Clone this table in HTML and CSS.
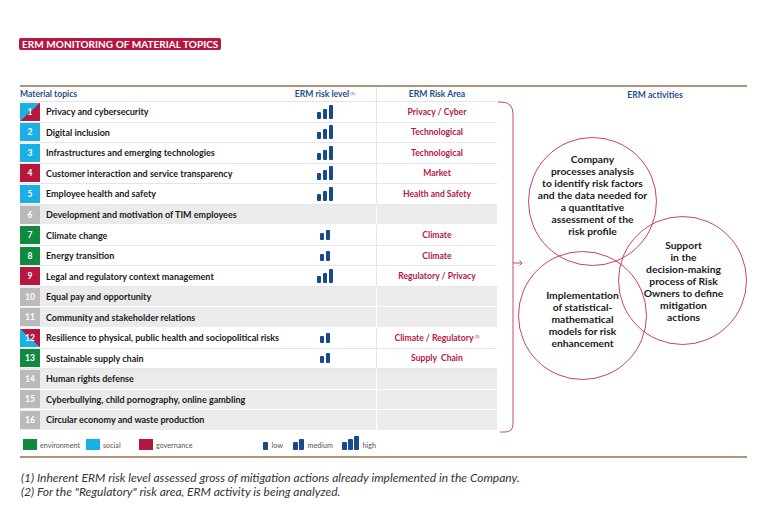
FILE: index.html
```html
<!DOCTYPE html>
<html lang="en">
<head>
<meta charset="utf-8">
<title>ERM monitoring of material topics</title>
<link rel="stylesheet" href="styles.css">
</head>
<body>
<div class="page">
  <div class="title"><span class="badge">ERM MONITORING OF MATERIAL TOPICS</span></div>
  <div class="rule"></div>
  <div class="main">
    <div class="table">
      <div class="thead">
        <div class="th th-topic">Material topics</div>
        <div class="th th-level">ERM risk level<sup>(1)</sup></div>
        <div class="th th-area">ERM Risk Area</div>
      </div>

      <div class="row"><div class="num split-a">1</div><div class="topic">Privacy and cybersecurity</div><div class="level"><span class="sig"><i class="b1"></i><i class="b2"></i><i class="b3"></i></span></div><div class="area">Privacy / Cyber</div></div>
      <div class="row"><div class="num social">2</div><div class="topic">Digital inclusion</div><div class="level"><span class="sig"><i class="b1"></i><i class="b2"></i><i class="b3"></i></span></div><div class="area">Technological</div></div>
      <div class="row"><div class="num social">3</div><div class="topic">Infrastructures and emerging technologies</div><div class="level"><span class="sig"><i class="b1"></i><i class="b2"></i><i class="b3"></i></span></div><div class="area">Technological</div></div>
      <div class="row"><div class="num gov">4</div><div class="topic">Customer interaction and service transparency</div><div class="level"><span class="sig"><i class="b1"></i><i class="b2"></i><i class="b3"></i></span></div><div class="area">Market</div></div>
      <div class="row"><div class="num social">5</div><div class="topic">Employee health and safety</div><div class="level"><span class="sig"><i class="b1"></i><i class="b2"></i><i class="b3"></i></span></div><div class="area">Health and Safety</div></div>
      <div class="row grey"><div class="num none">6</div><div class="topic">Development and motivation of TIM employees</div><div class="level"></div><div class="area"></div></div>
      <div class="row"><div class="num env">7</div><div class="topic">Climate change</div><div class="level"><span class="sig"><i class="b1"></i><i class="b2"></i></span></div><div class="area">Climate</div></div>
      <div class="row"><div class="num env">8</div><div class="topic">Energy transition</div><div class="level"><span class="sig"><i class="b1"></i><i class="b2"></i></span></div><div class="area">Climate</div></div>
      <div class="row"><div class="num gov">9</div><div class="topic">Legal and regulatory context management</div><div class="level"><span class="sig"><i class="b1"></i><i class="b2"></i><i class="b3"></i></span></div><div class="area">Regulatory / Privacy</div></div>
      <div class="row grey"><div class="num none">10</div><div class="topic">Equal pay and opportunity</div><div class="level"></div><div class="area"></div></div>
      <div class="row grey"><div class="num none">11</div><div class="topic">Community and stakeholder relations</div><div class="level"></div><div class="area"></div></div>
      <div class="row"><div class="num split-b">12</div><div class="topic">Resilience to physical, public health and sociopolitical risks</div><div class="level"><span class="sig"><i class="b1"></i><i class="b2"></i></span></div><div class="area">Climate / Regulatory<sup>(2)</sup></div></div>
      <div class="row"><div class="num env">13</div><div class="topic">Sustainable supply chain</div><div class="level"><span class="sig"><i class="b1"></i><i class="b2"></i></span></div><div class="area">Supply&nbsp; Chain</div></div>
      <div class="row grey"><div class="num none">14</div><div class="topic">Human rights defense</div><div class="level"></div><div class="area"></div></div>
      <div class="row grey"><div class="num none">15</div><div class="topic">Cyberbullying, child pornography, online gambling</div><div class="level"></div><div class="area"></div></div>
      <div class="row grey"><div class="num none">16</div><div class="topic">Circular economy and waste production</div><div class="level"></div><div class="area"></div></div>

      <div class="legend">
        <span class="lg-item"><span class="sw env"></span>environment</span>
        <span class="lg-item"><span class="sw social"></span>social</span>
        <span class="lg-item"><span class="sw gov"></span>governance</span>
        <span class="lg-item"><span class="sig lg"><i class="l1"></i></span>low</span>
        <span class="lg-item"><span class="sig lg"><i class="l1"></i><i class="l2"></i></span>medium</span>
        <span class="lg-item"><span class="sig lg"><i class="l1"></i><i class="l2"></i><i class="l3"></i></span>high</span>
      </div>
    </div>

    <div class="activities">
      <div class="act-head">ERM activities</div>
      <svg class="brace" width="30" height="360" viewBox="0 0 30 360">
        <path d="M1 15 H4 Q16 15 16 27 V337 Q16 345 8 345 H3" fill="none" stroke="#cc4a6e" stroke-width="1"/>
        <path d="M16 176 H25 M22.5 173.5 L25 176 L22.5 178.5" fill="none" stroke="#cc4a6e" stroke-width="1"/>
      </svg>
      <div class="circle c1"><p>Company<br>processes analysis<br>to identify risk factors<br>and the data needed for<br>a quantitative<br>assessment of the<br>risk profile</p></div>
      <div class="circle c2"><p>Support<br>in the<br>decision-making<br>process of Risk<br>Owners to define<br>mitigation<br>actions</p></div>
      <div class="circle c3"><p>Implementation<br>of statistical-<br>mathematical<br>models for risk<br>enhancement</p></div>
    </div>
  </div>
  <div class="rule rule-bottom"></div>
  <div class="notes">
    <p>(1) Inherent ERM risk level assessed gross of mitigation actions already implemented in the Company.</p>
    <p>(2) For the "Regulatory" risk area, ERM activity is being analyzed.</p>
  </div>
</div>
</body>
</html>
```

FILE: styles.css
```css
* { box-sizing: border-box; }

body {
  margin: 0;
  background: #fff;
  font-family: Lato, "Open Sans", "DejaVu Sans", sans-serif;
  color: #1a1a1a;
}

.page {
  width: 770px;
  height: 509px;
  padding: 32px 23px 0 20px;
  overflow: hidden;
}

.title { height: 12px; }

.badge {
  display: inline-block;
  height: 12px;
  line-height: 12px;
  margin-left: -1px;
  padding: 0 3px;
  border-radius: 2px;
  background: #b5173f;
  color: #fff;
  font-size: 10px;
  font-weight: 700;
  letter-spacing: 0.05px;
  white-space: nowrap;
}

.rule {
  margin-top: 41px;
  height: 2px;
  background: #ae9478;
}

.rule-bottom { margin-top: 0; }

.main {
  display: grid;
  grid-template-columns: 477px 1fr;
}

/* ---------- table ---------- */
.thead {
  display: grid;
  grid-template-columns: 256px 100px 121px;
  height: 15px;
  border-bottom: 1px solid #e4e4e4;
  color: #1f4e8c;
  font-size: 8.6px;
  font-weight: 700;
}

.th { display: flex; align-items: center; }
.th-level, .th-area { justify-content: center; }
.th-level { padding-right: 2px; }
.th-area { border-left: 1px solid #e4e4e4; }

sup {
  font-size: 4.5px;
  vertical-align: top;
  position: relative;
  top: -1px;
  margin-left: 1px;
  font-weight: 400;
}

.row {
  display: grid;
  grid-template-columns: 20px 236px 100px 121px;
  height: 20.56px;
  border-bottom: 1px solid #e6e6e6;
}

.row.grey {
  background: #ebebeb;
  border-bottom-color: #fff;
}

.num {
  align-self: center;
  height: 18px;
  display: flex;
  align-items: center;
  justify-content: center;
  color: #fff;
  font-size: 8.5px;
  font-weight: 700;
}

.social { background: #1ab0e6; }
.gov { background: #b5173f; }
.env { background: #0f8a3f; }
.none { background: #bababa; }
.split-a { background: linear-gradient(to bottom right, #1ab0e6 50%, #b5173f 50%); }
.split-b { background: linear-gradient(to top right, #1ab0e6 50%, #b5173f 50%); }

.topic {
  display: flex;
  align-items: center;
  padding-left: 6px;
  font-size: 9px;
  font-weight: 700;
  white-space: nowrap;
}

.level {
  display: flex;
  align-items: center;
  justify-content: center;
  padding-right: 2px;
}

.area {
  display: flex;
  align-items: center;
  justify-content: center;
  border-left: 1px solid #e6e6e6;
  color: #b5173f;
  font-size: 8.6px;
  font-weight: 700;
  white-space: nowrap;
}

.row.grey .area { border-left-color: #fff; }

.sig {
  display: inline-flex;
  align-items: flex-end;
  gap: 1.5px;
}

.sig i {
  display: block;
  width: 4.5px;
  border-radius: 1px;
  background: #174a8a;
}

.sig .b1 { height: 7px; }
.sig .b2 { height: 10px; }
.sig .b3 { height: 14px; }

.sig.lg i { width: 4.5px; }
.sig .l1 { height: 8px; }
.sig .l2 { height: 11px; }
.sig .l3 { height: 14px; }

/* ---------- legend ---------- */
.legend {
  display: grid;
  grid-template-columns: 63px 53px 124px 30px 49px auto;
  align-items: end;
  height: 25px;
  padding: 0 0 6px 3px;
  color: #555;
  font-size: 7.2px;
}

.lg-item {
  display: inline-flex;
  align-items: flex-end;
  gap: 3px;
  line-height: 8px;
  white-space: nowrap;
}

.sw {
  display: inline-block;
  width: 14px;
  height: 11px;
}

.lg-item .sig { margin-right: 1px; }

/* ---------- activities ---------- */
.activities {
  position: relative;
}

.act-head {
  height: 15px;
  display: flex;
  align-items: center;
  justify-content: center;
  padding-left: 66px;
  color: #1f4e8c;
  font-size: 8.6px;
  font-weight: 700;
}

.brace {
  position: absolute;
  left: 0;
  top: 0;
}

.circle {
  position: absolute;
  width: 129px;
  height: 129px;
  border: 1px solid #c94468;
  border-radius: 50%;
  display: flex;
  align-items: center;
  justify-content: center;
  text-align: center;
}

.circle p {
  margin: 0;
  font-size: 10.3px;
  font-weight: 700;
  line-height: 12px;
  color: #1a1a1a;
  white-space: nowrap;
}

.c1 { left: 31px; top: 50px; }
.c1 p { margin-top: -14px; }
.c2 { left: 121px; top: 129px; }
.c2 p { margin-left: 2px; }
.c3 { left: 21px; top: 164px; }
.c3 p { margin-top: 6px; }

/* ---------- notes ---------- */
.notes {
  margin-top: 13px;
  padding-left: 1px;
  color: #333;
  font-size: 12px;
  font-style: italic;
  line-height: 14px;
}

.notes p { margin: 0; }
```
